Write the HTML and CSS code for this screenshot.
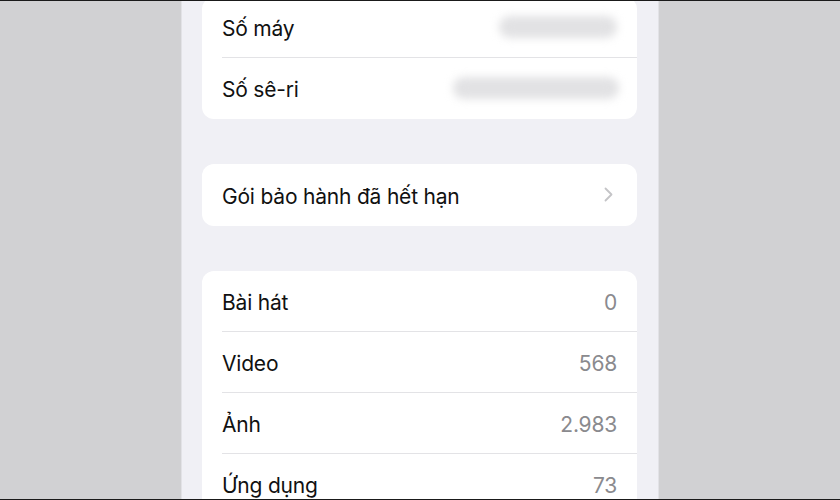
FILE: index.html
```html
<!DOCTYPE html>
<html lang="vi">
<head>
<meta charset="utf-8">
<link rel="stylesheet" href="styles.css">
</head>
<body>
<div class="frame">
  <div class="side"></div>
  <main class="phone">
    <section class="card card-first">
      <div class="row">
        <div class="row-inner">
          <span class="label">Số máy</span>
          <span class="blur blur-a"></span>
        </div>
      </div>
      <div class="row">
        <div class="row-inner">
          <span class="label">Số sê-ri</span>
          <span class="blur blur-b"></span>
        </div>
      </div>
    </section>

    <section class="card card-mid">
      <div class="row">
        <div class="row-inner">
          <span class="label">Gói bảo hành đã hết hạn</span>
          <svg class="chev" width="9" height="15" viewBox="0 0 9 15"><polyline points="1.5,1.5 7.5,7.5 1.5,13.5" fill="none" stroke="#c4c4c7" stroke-width="1.8" stroke-linecap="round" stroke-linejoin="round"/></svg>
        </div>
      </div>
    </section>

    <section class="card">
      <div class="row">
        <div class="row-inner">
          <span class="label">Bài hát</span>
          <span class="value">0</span>
        </div>
      </div>
      <div class="row">
        <div class="row-inner">
          <span class="label">Video</span>
          <span class="value">568</span>
        </div>
      </div>
      <div class="row">
        <div class="row-inner">
          <span class="label">Ảnh</span>
          <span class="value">2.983</span>
        </div>
      </div>
      <div class="row">
        <div class="row-inner">
          <span class="label">Ứng dụng</span>
          <span class="value">73</span>
        </div>
      </div>
    </section>
  </main>
  <div class="side"></div>
</div>
</body>
</html>
```

FILE: styles.css
```css
* { box-sizing: border-box; }
html, body {
  margin: 0;
  padding: 0;
  width: 840px;
  height: 500px;
  overflow: hidden;
  background: #d1d1d3;
  font-family: Inter, "Noto Sans", sans-serif;
}
.frame {
  display: flex;
  width: 840px;
  height: 500px;
  border-top: 1px solid #1a1a1a;
  border-bottom: 1px solid #1a1a1a;
  overflow: hidden;
}
.side {
  flex: 1;
  background: #d1d1d3;
}
.phone {
  width: 478px;
  flex: none;
  background: #f0f0f5;
  padding: 0 21px 0 20px;
  border-left: 1px solid #e2e2e6;
  border-right: 1px solid #e2e2e6;
}
.card {
  background: #ffffff;
  border-radius: 12px;
  margin-bottom: 45px;
  overflow: hidden;
}
.card-first {
  margin-top: -4px;
}
.card-mid {
  margin-bottom: 45px;
}
.card-mid .row-inner {
  height: 61px;
}
.row {
  padding-left: 20px;
}
.row-inner {
  box-sizing: content-box;
  height: 60px;
  display: flex;
  align-items: center;
  justify-content: space-between;
  padding-right: 20px;
  border-bottom: 1px solid #e3e3e6;
}
.row:last-child .row-inner {
  border-bottom-color: transparent;
}
.label {
  font-size: 21px;
  color: #111111;
  letter-spacing: -0.2px;
  padding-top: 3px;
}
.value {
  font-size: 21px;
  color: #8a8a8e;
  letter-spacing: -0.2px;
  padding-top: 3px;
}
.blur {
  display: block;
  height: 22px;
  border-radius: 11px;
  background: #e2e2e4;
  filter: blur(4px);
}
.blur-a { width: 118px; }
.blur-b { width: 166px; margin-right: -2px; }
.chev {
  margin-right: 4px;
}
```
